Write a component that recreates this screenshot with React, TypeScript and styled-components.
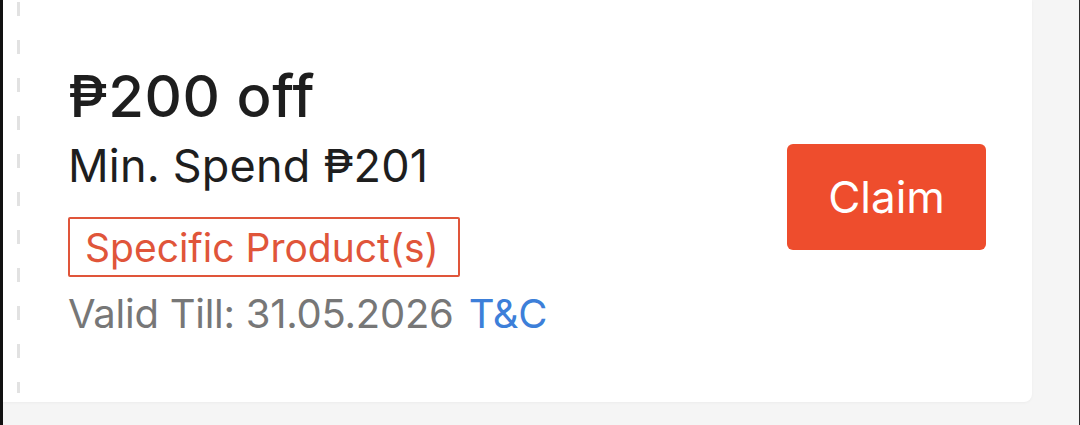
import styled, { createGlobalStyle } from 'styled-components';

const GlobalStyle = createGlobalStyle`
  html, body {
    margin: 0;
    padding: 0;
    background: #f5f5f5;
  }
  body {
    font-family: Inter, "Liberation Sans", sans-serif;
    -webkit-font-smoothing: antialiased;
  }
`;

const Page = styled.div`
  width: 1080px;
  height: 425px;
  box-sizing: border-box;
  border-left: 3px solid #111;
  border-right: 1px solid #2a2a2a;
  background: #f5f5f5;
  overflow: hidden;
`;

const Card = styled.div`
  width: 1029px;
  height: 402px;
  background: #fff;
  border-bottom-right-radius: 8px;
  box-shadow: 0 1px 3px rgba(0, 0, 0, 0.04);
  display: flex;
  align-items: stretch;
`;

const DashedEdge = styled.div`
  width: 3px;
  margin-left: 14px;
  margin-top: 2px;
  margin-bottom: 9px;
  background: repeating-linear-gradient(
    to bottom,
    #e2e2e2 0,
    #e2e2e2 14px,
    transparent 14px,
    transparent 38px
  );
`;

const Body = styled.div`
  flex: 1;
  display: flex;
  align-items: center;
  justify-content: space-between;
  padding: 0 46px 0 48px;
`;

const Info = styled.div`
  display: flex;
  flex-direction: column;
  align-items: flex-start;
`;

const Title = styled.div`
  font-size: 58px;
  font-weight: 500;
  line-height: 64px;
  letter-spacing: 0.6px;
  color: #1e1e1e;
`;

const MinSpend = styled.div`
  font-size: 45px;
  line-height: 54px;
  letter-spacing: 0.2px;
  color: #1e1e1e;
  margin-top: 11px;
`;

const Tag = styled.div`
  margin-top: 24px;
  box-sizing: border-box;
  border: 2px solid #e0553a;
  border-radius: 2px;
  padding: 0 19px 0 15px;
  height: 60px;
  display: flex;
  align-items: center;
  font-size: 39px;
  color: #e0553a;
`;

const Validity = styled.div`
  margin-top: 13px;
  display: flex;
  align-items: baseline;
  gap: 15px;
  font-size: 40px;
  line-height: 48px;
  letter-spacing: -0.25px;
  color: #777;
`;

const TermsLink = styled.a`
  color: #3d7fd9;
  text-decoration: none;
`;

const ClaimButton = styled.button`
  width: 199px;
  height: 106px;
  border: none;
  border-radius: 6px;
  background: #ee4d2d;
  color: #fff;
  font-family: inherit;
  font-size: 44px;
  cursor: pointer;
  margin-top: -8px;
`;

export default function App() {
  return (
    <>
      <GlobalStyle />
      <Page>
        <Card>
          <DashedEdge />
          <Body>
            <Info>
              <Title>₱200 off</Title>
              <MinSpend>Min. Spend ₱201</MinSpend>
              <Tag>Specific Product(s)</Tag>
              <Validity>
                <span>Valid Till: 31.05.2026</span>
                <TermsLink href="#">T&amp;C</TermsLink>
              </Validity>
            </Info>
            <ClaimButton>Claim</ClaimButton>
          </Body>
        </Card>
      </Page>
    </>
  );
}
